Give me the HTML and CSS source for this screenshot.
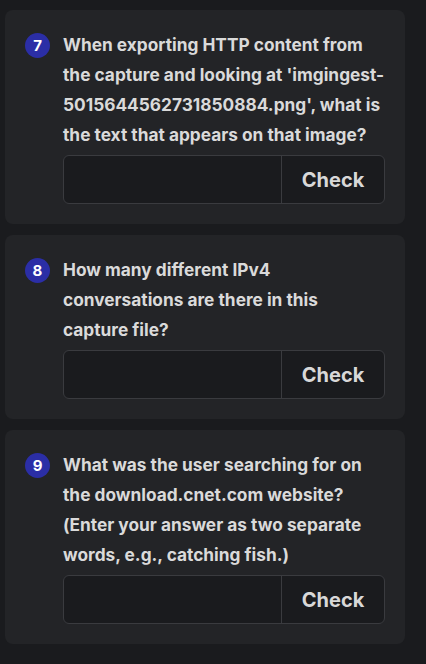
FILE: index.html
```html
<!DOCTYPE html>
<html>
<head>
<meta charset="utf-8">
<link rel="stylesheet" href="styles.css">
</head>
<body>
<div class="list">
  <div class="card">
    <div class="q">
      <span class="badge">7</span>
      <div class="body">
        <p class="text">When exporting HTTP content from the capture and looking at 'imgingest-5015644562731850884.png', what is the text that appears on that image?</p>
        <div class="group"><input class="field" type="text"><button class="btn">Check</button></div>
      </div>
    </div>
  </div>
  <div class="card">
    <div class="q">
      <span class="badge">8</span>
      <div class="body">
        <p class="text">How many different IPv4 conversations are there in this capture file?</p>
        <div class="group"><input class="field" type="text"><button class="btn">Check</button></div>
      </div>
    </div>
  </div>
  <div class="card">
    <div class="q">
      <span class="badge">9</span>
      <div class="body">
        <p class="text">What was the user searching for on the download.cnet.com website? (Enter your answer as two separate words, e.g., catching fish.)</p>
        <div class="group"><input class="field" type="text"><button class="btn">Check</button></div>
      </div>
    </div>
  </div>
</div>
</body>
</html>
```
FILE: styles.css
```css
html, body { margin: 0; padding: 0; background: #1a1b1e; }
body { font-family: Inter, "Noto Sans", sans-serif; }
.list { display: flex; flex-direction: column; gap: 11px; padding: 10px 0 0 5px; width: 400px; }
.card { background: #232427; border-radius: 8px; padding: 20px; }
.q { display: flex; gap: 13px; align-items: flex-start; }
.badge { flex: none; width: 25px; height: 25px; margin-top: 3px; border-radius: 50%; background: #2b2ea6; color: #fff; font-weight: 700; font-size: 15px; display: flex; align-items: center; justify-content: center; }
.body { flex: 1; min-width: 0; }
.text { margin: 0; color: #dadada; font-weight: 700; font-size: 17.3px; line-height: 30px; }
.group { display: flex; height: 49px; margin-top: 5px; border: 1px solid #3a3b3f; border-radius: 6px; overflow: hidden; box-sizing: border-box; background: #1a1b1e; }
.field { flex: 1; min-width: 0; border: none; background: transparent; outline: none; color: #ddd; padding: 0 12px; font-size: 16px; }
.btn { flex: none; width: 103px; border: none; border-left: 1px solid #3a3b3f; background: transparent; color: #d8d8d8; font-family: Inter, sans-serif; font-weight: 700; font-size: 20px; padding: 0; }
```
